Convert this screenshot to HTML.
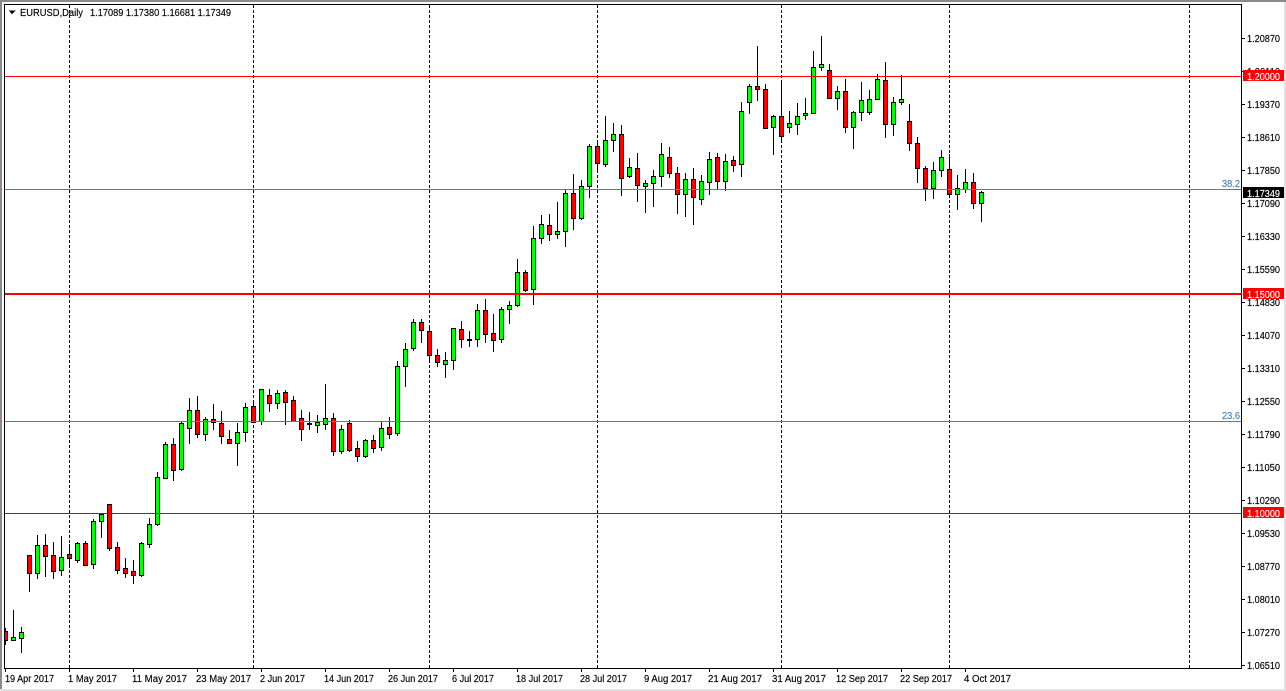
<!DOCTYPE html>
<html><head><meta charset="utf-8"><title>EURUSD,Daily</title>
<style>html,body{margin:0;padding:0;background:#fff;overflow:hidden}svg{display:block}
text{font-family:"Liberation Sans",sans-serif;font-size:10px;fill:#000;stroke:#000;stroke-width:.15px}
text.w{fill:#fff;stroke:#fff}text.b{fill:#4682b4;stroke:#4682b4}</style></head><body>
<svg width="1286" height="691" viewBox="0 0 1286 691" xmlns="http://www.w3.org/2000/svg">
<rect width="1286" height="691" fill="#fff"/>
<g shape-rendering="crispEdges">
<rect x="0" y="0" width="1286" height="2" fill="#8a8a8a"/>
<rect x="0" y="0" width="2" height="691" fill="#8a8a8a"/>
<rect x="0" y="689" width="1286" height="2" fill="#e2e2e2"/>
<rect x="1284" y="2" width="2" height="689" fill="#e2e2e2"/>
<path d="M69.5 5V668M253.5 5V668M429.5 5V668M597.5 5V668M781.5 5V668M949.5 5V668M1189.5 5V668" stroke="#000" stroke-width="1" stroke-dasharray="3 2" fill="none"/>
<path stroke="#000" stroke-width="1" fill="none" d="M5.5 628V645M13.5 610V641M21.5 627V653M29.5 555V592M37.5 535V579M45.5 534V577M53.5 542V579M61.5 536V576M69.5 544V565M77.5 542V563M85.5 541V565M93.5 519V569M101.5 513V538M109.5 504V551M117.5 542V574M125.5 558V578M133.5 560V584M141.5 542V577M149.5 518V548M157.5 472V526M165.5 442V479M173.5 438V481M181.5 422V471M189.5 398V444M197.5 396V438M205.5 417V441M213.5 404V430M221.5 411V444M229.5 430V443M237.5 423V466M245.5 403V442M253.5 400V423M261.5 389V425M269.5 389V412M277.5 390V409M285.5 390V425M293.5 396V421M301.5 410V441M309.5 412V430M317.5 415V433M325.5 384V430M333.5 413V456M341.5 425V454M349.5 420V452M357.5 441V462M365.5 439V458M373.5 435V453M381.5 422V451M389.5 417V439M397.5 361V436M405.5 343V387M413.5 319V351M421.5 319V343M429.5 327V361M437.5 349V367M445.5 352V378M453.5 328V370M461.5 321V348M469.5 331V347M477.5 304V347M485.5 299V343M493.5 314V352M501.5 307V343M509.5 301V324M517.5 259V307M525.5 270V292M533.5 226V305M541.5 215V244M549.5 214V241M557.5 202V239M565.5 190V247M573.5 174V230M581.5 180V220M589.5 144V198M597.5 142V172M605.5 116V167M613.5 123V152M621.5 125V196M629.5 158V178M637.5 153V202M645.5 180V213M653.5 170V207M661.5 143V187M669.5 147V178M677.5 167V214M685.5 173V217M693.5 168V225M701.5 175V205M709.5 152V195M717.5 153V189M725.5 154V191M733.5 156V172M741.5 102V177M749.5 84V114M757.5 46V101M765.5 84V129M773.5 115V155M781.5 82V141M789.5 111V133M797.5 103V135M805.5 98V120M813.5 51V114M821.5 36V71M829.5 64V99M837.5 86V110M845.5 79V133M853.5 111V149M861.5 82V121M869.5 90V115M877.5 74V100M885.5 62V138M893.5 97V136M901.5 75V105M909.5 104V151M917.5 137V183M925.5 166V201M933.5 162V199M941.5 150V177M949.5 154V197M957.5 175V210M965.5 169V193M973.5 173V209M981.5 191V222"/>
<path fill="#00ff00" stroke="#000" stroke-width="1" d="M11.5 637.5h4V640.5h-4zM19.5 632.5h4V638.5h-4zM35.5 545.5h4V573.5h-4zM59.5 557.5h4V570.5h-4zM75.5 543.5h4V560.5h-4zM91.5 521.5h4V564.5h-4zM99.5 514.5h4V521.5h-4zM139.5 543.5h4V575.5h-4zM147.5 524.5h4V544.5h-4zM155.5 477.5h4V524.5h-4zM163.5 444.5h4V478.5h-4zM179.5 423.5h4V469.5h-4zM187.5 410.5h4V428.5h-4zM203.5 419.5h4V434.5h-4zM235.5 432.5h4V443.5h-4zM243.5 407.5h4V432.5h-4zM259.5 389.5h4V421.5h-4zM275.5 393.5h4V403.5h-4zM315.5 422.5h4V425.5h-4zM323.5 418.5h4V424.5h-4zM339.5 429.5h4V451.5h-4zM363.5 440.5h4V456.5h-4zM379.5 428.5h4V447.5h-4zM395.5 366.5h4V433.5h-4zM403.5 349.5h4V366.5h-4zM411.5 322.5h4V348.5h-4zM443.5 360.5h4V364.5h-4zM451.5 328.5h4V360.5h-4zM475.5 310.5h4V339.5h-4zM499.5 309.5h4V339.5h-4zM507.5 305.5h4V309.5h-4zM515.5 272.5h4V305.5h-4zM531.5 238.5h4V289.5h-4zM539.5 224.5h4V238.5h-4zM555.5 231.5h4V234.5h-4zM563.5 193.5h4V231.5h-4zM579.5 186.5h4V218.5h-4zM587.5 146.5h4V186.5h-4zM603.5 140.5h4V164.5h-4zM611.5 134.5h4V140.5h-4zM627.5 167.5h4V176.5h-4zM643.5 183.5h4V186.5h-4zM651.5 176.5h4V183.5h-4zM659.5 154.5h4V176.5h-4zM683.5 179.5h4V194.5h-4zM699.5 181.5h4V199.5h-4zM707.5 159.5h4V182.5h-4zM723.5 161.5h4V181.5h-4zM739.5 111.5h4V164.5h-4zM747.5 86.5h4V102.5h-4zM771.5 116.5h4V127.5h-4zM787.5 123.5h4V127.5h-4zM795.5 116.5h4V124.5h-4zM803.5 113.5h4V115.5h-4zM811.5 67.5h4V113.5h-4zM819.5 64.5h4V67.5h-4zM835.5 91.5h4V98.5h-4zM851.5 112.5h4V127.5h-4zM859.5 100.5h4V112.5h-4zM867.5 99.5h4V112.5h-4zM875.5 79.5h4V99.5h-4zM891.5 102.5h4V124.5h-4zM899.5 99.5h4V102.5h-4zM931.5 170.5h4V188.5h-4zM939.5 157.5h4V170.5h-4zM955.5 188.5h4V194.5h-4zM963.5 182.5h4V189.5h-4zM979.5 192.5h4V203.5h-4z"/>
<path fill="#ff0000" stroke="#000" stroke-width="1" d="M4.5 631.5h3V640.5h-3zM27.5 555.5h4V573.5h-4zM43.5 545.5h4V556.5h-4zM51.5 555.5h4V571.5h-4zM67.5 554.5h4V558.5h-4zM83.5 543.5h4V565.5h-4zM107.5 504.5h4V548.5h-4zM115.5 547.5h4V570.5h-4zM123.5 568.5h4V573.5h-4zM131.5 571.5h4V575.5h-4zM171.5 444.5h4V470.5h-4zM195.5 410.5h4V434.5h-4zM211.5 419.5h4V422.5h-4zM219.5 423.5h4V436.5h-4zM227.5 439.5h4V443.5h-4zM251.5 406.5h4V422.5h-4zM267.5 395.5h4V403.5h-4zM283.5 392.5h4V402.5h-4zM291.5 400.5h4V421.5h-4zM299.5 418.5h4V429.5h-4zM307.5 423.5h4V424.5h-4zM331.5 418.5h4V451.5h-4zM347.5 423.5h4V450.5h-4zM355.5 448.5h4V456.5h-4zM371.5 440.5h4V448.5h-4zM387.5 427.5h4V434.5h-4zM419.5 322.5h4V330.5h-4zM427.5 331.5h4V355.5h-4zM435.5 355.5h4V362.5h-4zM459.5 329.5h4V339.5h-4zM467.5 339.5h4V340.5h-4zM483.5 310.5h4V334.5h-4zM491.5 333.5h4V340.5h-4zM523.5 272.5h4V290.5h-4zM547.5 225.5h4V234.5h-4zM571.5 193.5h4V218.5h-4zM595.5 146.5h4V163.5h-4zM619.5 134.5h4V178.5h-4zM635.5 168.5h4V185.5h-4zM667.5 157.5h4V173.5h-4zM675.5 173.5h4V194.5h-4zM691.5 179.5h4V197.5h-4zM715.5 157.5h4V181.5h-4zM731.5 160.5h4V165.5h-4zM755.5 86.5h4V89.5h-4zM763.5 89.5h4V128.5h-4zM779.5 116.5h4V136.5h-4zM827.5 70.5h4V98.5h-4zM843.5 91.5h4V127.5h-4zM883.5 80.5h4V124.5h-4zM907.5 121.5h4V143.5h-4zM915.5 143.5h4V168.5h-4zM923.5 168.5h4V188.5h-4zM947.5 169.5h4V194.5h-4zM971.5 182.5h4V203.5h-4z"/>
<rect x="5" y="189" width="1236" height="1" fill="#4682b4"/>
<rect x="5" y="421" width="1236" height="1" fill="#4682b4"/>
<rect x="5" y="76" width="1236" height="1" fill="#ff0000"/>
<rect x="5" y="293" width="1236" height="2" fill="#ff0000"/>
<rect x="5" y="513" width="1236" height="1" fill="#d80000"/>
<path fill="none" stroke="#000" stroke-width="1" d="M4.5 4.5H1241.5V668.5H4.5Z"/>
<path fill="none" stroke="#000" stroke-width="1" d="M1242 38.5h3M1242 71.5h3M1242 104.5h3M1242 137.5h3M1242 170.5h3M1242 203.5h3M1242 236.5h3M1242 269.5h3M1242 302.5h3M1242 335.5h3M1242 368.5h3M1242 401.5h3M1242 434.5h3M1242 467.5h3M1242 500.5h3M1242 533.5h3M1242 566.5h3M1242 599.5h3M1242 632.5h3M1242 665.5h3M5.5 669v3M69.5 669v3M133.5 669v3M197.5 669v3M261.5 669v3M325.5 669v3M389.5 669v3M453.5 669v3M517.5 669v3M581.5 669v3M645.5 669v3M709.5 669v3M773.5 669v3M837.5 669v3M901.5 669v3M965.5 669v3"/>
<path d="M9 10.5h6.500L12 14.500z" fill="#000"/>
</g>
<text x="20" y="16" textLength="63" lengthAdjust="spacingAndGlyphs">EURUSD,Daily</text>
<text x="90" y="16" textLength="141" lengthAdjust="spacingAndGlyphs">1.17089 1.17380 1.16681 1.17349</text>
<g>
<text x="1247" y="42" textLength="33" lengthAdjust="spacingAndGlyphs">1.20870</text>
<text x="1247" y="108" textLength="33" lengthAdjust="spacingAndGlyphs">1.19370</text>
<text x="1247" y="141" textLength="33" lengthAdjust="spacingAndGlyphs">1.18610</text>
<text x="1247" y="174" textLength="33" lengthAdjust="spacingAndGlyphs">1.17850</text>
<text x="1247" y="207" textLength="33" lengthAdjust="spacingAndGlyphs">1.17090</text>
<text x="1247" y="240" textLength="33" lengthAdjust="spacingAndGlyphs">1.16330</text>
<text x="1247" y="273" textLength="33" lengthAdjust="spacingAndGlyphs">1.15590</text>
<text x="1247" y="306" textLength="33" lengthAdjust="spacingAndGlyphs">1.14830</text>
<text x="1247" y="339" textLength="33" lengthAdjust="spacingAndGlyphs">1.14070</text>
<text x="1247" y="372" textLength="33" lengthAdjust="spacingAndGlyphs">1.13310</text>
<text x="1247" y="405" textLength="33" lengthAdjust="spacingAndGlyphs">1.12550</text>
<text x="1247" y="438" textLength="33" lengthAdjust="spacingAndGlyphs">1.11790</text>
<text x="1247" y="471" textLength="33" lengthAdjust="spacingAndGlyphs">1.11050</text>
<text x="1247" y="504" textLength="33" lengthAdjust="spacingAndGlyphs">1.10290</text>
<text x="1247" y="537" textLength="33" lengthAdjust="spacingAndGlyphs">1.09530</text>
<text x="1247" y="570" textLength="33" lengthAdjust="spacingAndGlyphs">1.08770</text>
<text x="1247" y="603" textLength="33" lengthAdjust="spacingAndGlyphs">1.08010</text>
<text x="1247" y="636" textLength="33" lengthAdjust="spacingAndGlyphs">1.07270</text>
<text x="1247" y="669" textLength="33" lengthAdjust="spacingAndGlyphs">1.06510</text>
</g>
<text x="1247" y="75" textLength="33" lengthAdjust="spacingAndGlyphs">1.20110</text>
<g shape-rendering="crispEdges">
<rect x="1243" y="70" width="41" height="11" fill="#ff0000"/>
<rect x="1243" y="187" width="41" height="11" fill="#000"/>
<rect x="1243" y="288" width="41" height="11" fill="#ff0000"/>
<rect x="1243" y="507" width="41" height="11" fill="#ff0000"/>
</g>
<text class="w" x="1247" y="80" textLength="33" lengthAdjust="spacingAndGlyphs">1.20000</text>
<text class="w" x="1247" y="197" textLength="33" lengthAdjust="spacingAndGlyphs">1.17349</text>
<text class="w" x="1247" y="298" textLength="33" lengthAdjust="spacingAndGlyphs">1.15000</text>
<text class="w" x="1247" y="517" textLength="33" lengthAdjust="spacingAndGlyphs">1.10000</text>
<text class="b" x="1222" y="187" textLength="18" lengthAdjust="spacingAndGlyphs">38.2</text>
<text class="b" x="1222" y="419" textLength="18" lengthAdjust="spacingAndGlyphs">23.6</text>
<g>
<text x="5" y="682" textLength="49" lengthAdjust="spacingAndGlyphs">19 Apr 2017</text>
<text x="68" y="682" textLength="49" lengthAdjust="spacingAndGlyphs">1 May 2017</text>
<text x="132" y="682" textLength="55" lengthAdjust="spacingAndGlyphs">11 May 2017</text>
<text x="196" y="682" textLength="55" lengthAdjust="spacingAndGlyphs">23 May 2017</text>
<text x="260" y="682" textLength="45" lengthAdjust="spacingAndGlyphs">2 Jun 2017</text>
<text x="324" y="682" textLength="50" lengthAdjust="spacingAndGlyphs">14 Jun 2017</text>
<text x="388" y="682" textLength="50" lengthAdjust="spacingAndGlyphs">26 Jun 2017</text>
<text x="452" y="682" textLength="42" lengthAdjust="spacingAndGlyphs">6 Jul 2017</text>
<text x="516" y="682" textLength="47" lengthAdjust="spacingAndGlyphs">18 Jul 2017</text>
<text x="580" y="682" textLength="47" lengthAdjust="spacingAndGlyphs">28 Jul 2017</text>
<text x="644" y="682" textLength="48" lengthAdjust="spacingAndGlyphs">9 Aug 2017</text>
<text x="708" y="682" textLength="54" lengthAdjust="spacingAndGlyphs">21 Aug 2017</text>
<text x="772" y="682" textLength="54" lengthAdjust="spacingAndGlyphs">31 Aug 2017</text>
<text x="836" y="682" textLength="52" lengthAdjust="spacingAndGlyphs">12 Sep 2017</text>
<text x="900" y="682" textLength="52" lengthAdjust="spacingAndGlyphs">22 Sep 2017</text>
<text x="964" y="682" textLength="47" lengthAdjust="spacingAndGlyphs">4 Oct 2017</text>
</g>
</svg>
</body></html>
